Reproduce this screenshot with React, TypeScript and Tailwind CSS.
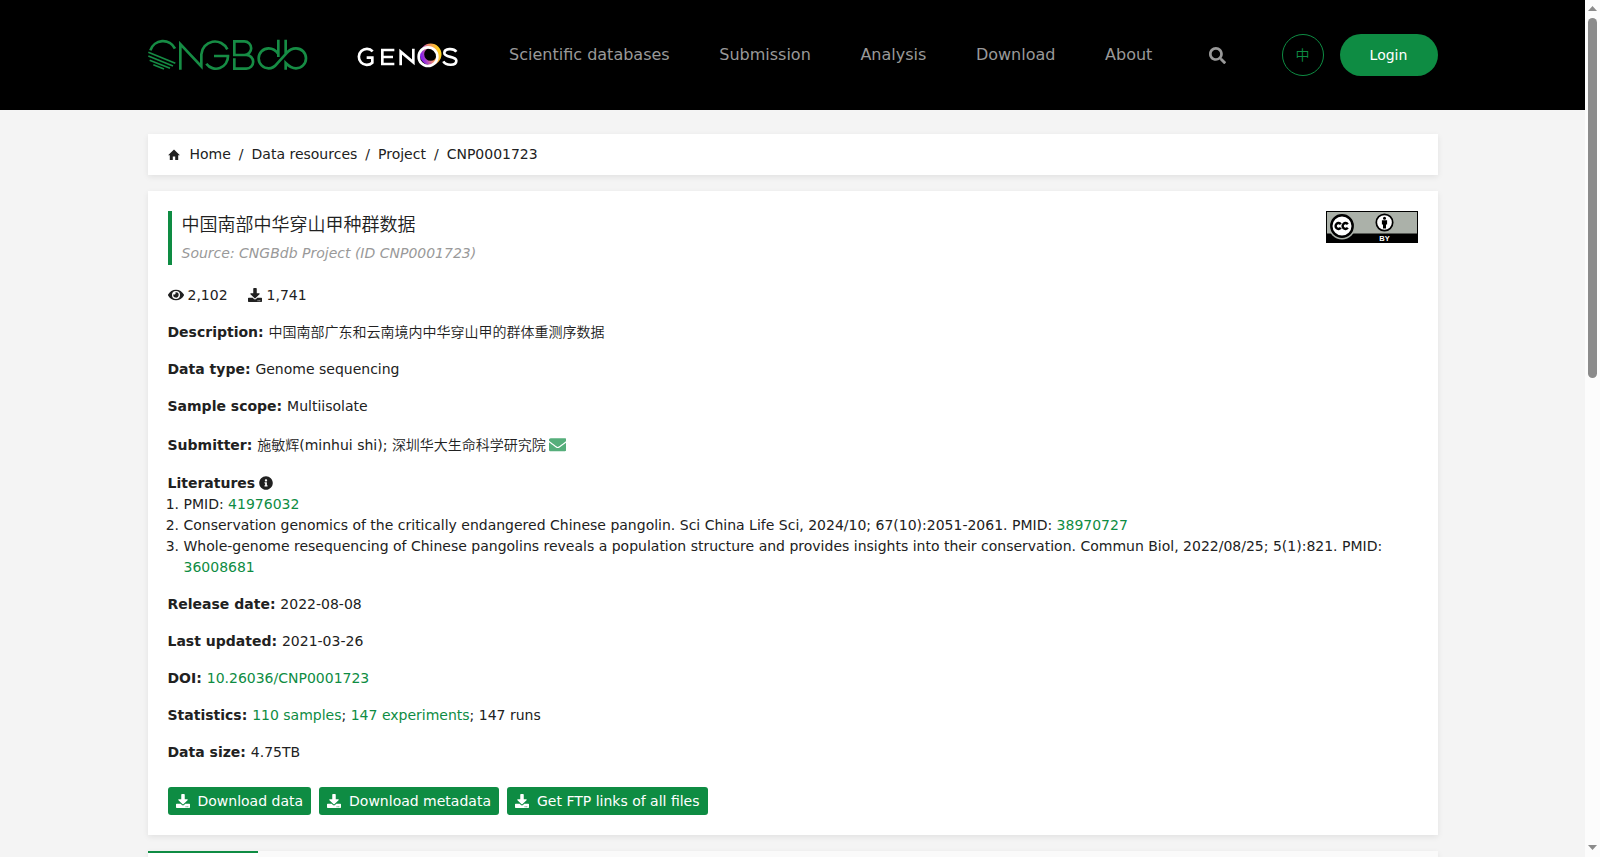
import { FaDownload, FaEnvelope, FaEye, FaInfoCircle, FaSearch } from "react-icons/fa";
import type { ReactNode } from "react";

const navItems = ["Scientific databases", "Submission", "Analysis", "Download", "About"];

const crumbs = ["Home", "Data resources", "Project", "CNP0001723"];

const downloads = ["Download data", "Download metadata", "Get FTP links of all files"];

function Logo() {
  return (
    <svg width="160" height="32" viewBox="24 42 480 96" fill="none" stroke="#168c44" strokeWidth="8">
      <path d="M31 76A40 40 0 0 1 105 71" />
      <path d="M25 82L106 115M25 93L99 123M29 106L90 130M40 119L72 132" strokeWidth="5" />
      <path d="M121 134V57L184 124V88A41 41 0 0 1 262 73" />
      <path d="M222 93H264A36 37 0 0 1 199 116" />
      <path d="M283 90V49H313A20 20 0 0 1 313 90H279M313 90H319A20 20 0 0 1 319 131H283V100" />
      <path d="M415 44V96M415 87C406 74 396 70 386 70A30 30 0 0 0 386 130C399 130 405 124 412 115L441 83C449 73 458 70 468 70A30 30 0 0 1 468 130C454 130 447 124 437 114V134M437 44V86" />
    </svg>
  );
}

function GenosLogo() {
  return (
    <svg width="102" height="27" viewBox="650 49 306 81" fill="none">
      <defs>
        <linearGradient id="ring" x1="0" y1="0.6" x2="1" y2="0.3">
          <stop offset="0" stopColor="#8a22e8" />
          <stop offset="0.5" stopColor="#f08a6c" />
          <stop offset="1" stopColor="#ffd21f" />
        </linearGradient>
      </defs>
      <g stroke="#fff" strokeWidth="8">
        <path d="M697 77A24 24 0 1 0 696 111V96H679" />
        <path d="M762 73H726V115H762M726 94H758" />
        <path d="M781 119V78L819 110V69" />
        <path d="M948 78C940 67 912 67 912 82C912 97 948 90 948 105C948 121 917 121 909 107" />
      </g>
      <circle cx="871" cy="86" r="26" stroke="url(#ring)" strokeWidth="13" />
      <circle cx="863" cy="93" r="28" stroke="#fff" strokeWidth="8" />
    </svg>
  );
}

function HomeIcon() {
  return (
    <svg width="12" height="12" viewBox="0 0 12 12" fill="currentColor" className="mt-px ml-[0.5px]">
      <path d="M6 .5L11.900 6.300H10.200V11H7.200V7.600H4.800V11H1.800V6.300H.1Z" />
    </svg>
  );
}

function CcByBadge() {
  return (
    <svg width="92" height="32" viewBox="0 0 92 32" className="shrink-0">
      <rect width="92" height="32" fill="#000" />
      <rect x="1" y="1" width="90" height="21.500" fill="#abb1a9" />
      <circle cx="16" cy="15" r="13.500" fill="#abb1a9" />
      <circle cx="16" cy="15" r="10.700" fill="#fff" stroke="#000" strokeWidth="2.400" />
      <g fill="none" stroke="#000" strokeWidth="2.500">
        <path d="M14.800 13.200A2.900 2.900 0 1 0 14.800 16.800" />
        <path d="M21.800 13.200A2.900 2.900 0 1 0 21.800 16.800" />
      </g>
      <circle cx="58.500" cy="11.500" r="8.200" fill="#fff" stroke="#000" strokeWidth="1.700" />
      <circle cx="58.500" cy="7.200" r="1.500" />
      <path d="M55.900 9.300H61.100V13.500H60V17.500H57V13.500H55.900Z" />
      <text x="58.500" y="30" textAnchor="middle" fill="#fff" className="font-['Liberation_Sans'] text-[7.500px] font-bold">
        BY
      </text>
    </svg>
  );
}

interface RowProps {
  label: string;
  className?: string;
  children: ReactNode;
}

function Row({ label, className = "mb-4", children }: RowProps) {
  return (
    <div className={className}>
      <b>{label}: </b>
      {children}
    </div>
  );
}

function Link({ children }: { children: ReactNode }) {
  return <a className="cursor-pointer text-[#0e8c43]">{children}</a>;
}

// Chinese runs are set a little lighter than the latin text
function Zh({ children }: { children: ReactNode }) {
  return <span className="font-[350]">{children}</span>;
}

function Scrollbar() {
  return (
    <div className="flex w-[15px] shrink-0 flex-col items-center bg-[#fcfcfc] pt-[6px] pb-[7px]">
      <svg width="9" height="5" viewBox="0 0 9 5" fill="#8b8b8b">
        <path d="M4.500 0L9 5H0Z" />
      </svg>
      <div className="mt-[7px] h-[360px] w-[9px] rounded-full bg-[#8b8b8b]" />
      <svg width="9" height="5" viewBox="0 0 9 5" fill="#8b8b8b" className="mt-auto">
        <path d="M0 0H9L4.500 5Z" />
      </svg>
    </div>
  );
}

export default function App() {
  return (
    <div className="flex h-[857px] w-[1600px] overflow-hidden bg-[#f4f4f4] font-['DejaVu_Sans','Noto_Sans_CJK_SC',sans-serif] text-sm leading-[21px] text-[#212121]">
      <div className="min-w-0 flex-1">
        <header className="h-[110px] bg-black">
          <div className="mx-auto flex h-full w-[1290px] items-center">
            <Logo />
            <div className="ml-[49px]">
              <GenosLogo />
            </div>
            <nav className="ml-[50.6px] flex gap-[49.6px] text-base leading-6 text-[#999]">
              {navItems.map((item) => (
                <a key={item}>{item}</a>
              ))}
            </nav>
            <FaSearch className="ml-[56.5px] size-[17px] text-[#999]" />
            <div className="ml-auto flex size-[42px] items-center justify-center rounded-full border border-[#0e8c43] text-[#0e8c43]">
              <Zh>中</Zh>
            </div>
            <button className="ml-4 h-[42px] w-[98px] rounded-full bg-[#0e8c43] text-white">Login</button>
          </div>
        </header>

        <main className="mx-auto w-[1290px] pt-6">
          <div className="flex h-[41px] items-center bg-white pl-5 shadow-[0_2px_6px_rgba(0,0,0,0.08)]">
            <HomeIcon />
            <div className="ml-[9.5px] flex gap-2">
              {crumbs.map((crumb, i) => (
                <span key={crumb} className="flex gap-2">
                  {i > 0 && <span>/</span>}
                  {crumb}
                </span>
              ))}
            </div>
          </div>

          <section className="mt-4 h-[644px] bg-white p-5 shadow-[0_2px_6px_rgba(0,0,0,0.08)]">
            <div className="flex items-start justify-between">
              <div className="h-[54px] border-l-4 border-[#0e8c43] pl-[10px]">
                <h1 className="text-lg leading-[27px]">
                  <Zh>中国南部中华穿山甲种群数据</Zh>
                </h1>
                <div className="mt-[5px] text-[#999] italic">Source: CNGBdb Project (ID CNP0001723)</div>
              </div>
              <CcByBadge />
            </div>

            <div className="mt-5 mb-4 flex items-center">
              <FaEye className="-mt-px size-4" />
              <span className="ml-1">2,102</span>
              <FaDownload className="-mt-px ml-[20.500px] size-[14px]" />
              <span className="ml-[4.500px]">1,741</span>
            </div>

            <Row label="Description">
              <Zh>中国南部广东和云南境内中华穿山甲的群体重测序数据</Zh>
            </Row>
            <Row label="Data type">Genome sequencing</Row>
            <Row label="Sample scope">Multiisolate</Row>
            <Row label="Submitter" className="mt-[18px] mb-[17px]">
              <Zh>施敏辉</Zh>(minhui shi); <Zh>深圳华大生命科学研究院</Zh>
              <FaEnvelope className="ml-[3px] inline size-[17.500px] align-[-3.5px] text-[#56ae7b]" />
            </Row>

            <div className="mb-4">
              <div className="flex items-center gap-1">
                <b>Literatures</b>
                <FaInfoCircle className="-mt-px size-[14px]" />
              </div>
              <ol className="list-decimal pl-4">
                <li>
                  PMID: <Link>41976032</Link>
                </li>
                <li>
                  Conservation genomics of the critically endangered Chinese pangolin. Sci China Life Sci, 2024/10;
                  67(10):2051-2061. PMID: <Link>38970727</Link>
                </li>
                <li>
                  Whole-genome resequencing of Chinese pangolins reveals a population structure and provides insights
                  into their conservation. Commun Biol, 2022/08/25; 5(1):821. PMID: <Link>36008681</Link>
                </li>
              </ol>
            </div>

            <Row label="Release date">2022-08-08</Row>
            <Row label="Last updated">2021-03-26</Row>
            <Row label="DOI">
              <Link>10.26036/CNP0001723</Link>
            </Row>
            <Row label="Statistics">
              <Link>110 samples</Link>; <Link>147 experiments</Link>; 147 runs
            </Row>
            <Row label="Data size">4.75TB</Row>

            <div className="mt-6 flex gap-2">
              {downloads.map((text) => (
                <button key={text} className="flex h-7 items-center gap-2 rounded-[3px] bg-[#0e8c43] px-2 text-white">
                  <FaDownload className="-mt-px size-[14px]" />
                  {text}
                </button>
              ))}
            </div>
          </section>

          <div className="mt-4 h-10 bg-[#fafafa] shadow-[0_2px_6px_rgba(0,0,0,0.08)]">
            <div className="h-10 w-[110px] border-t-2 border-[#0e8c43] bg-white" />
          </div>
        </main>
      </div>
      <Scrollbar />
    </div>
  );
}
